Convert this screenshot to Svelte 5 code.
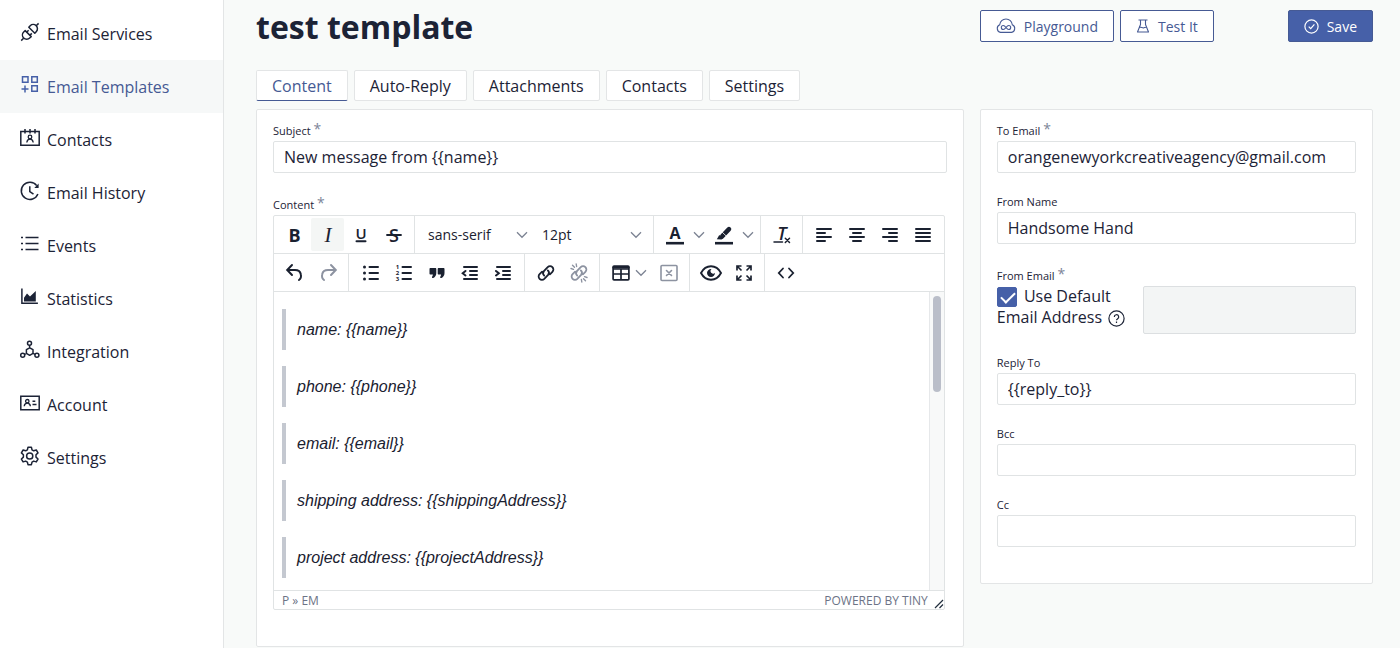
<script>
  const nav = [
    { label: 'Email Services', icon: 'plug' },
    { label: 'Email Templates', icon: 'templates', active: true },
    { label: 'Contacts', icon: 'contacts' },
    { label: 'Email History', icon: 'history' },
    { label: 'Events', icon: 'events' },
    { label: 'Statistics', icon: 'stats' },
    { label: 'Integration', icon: 'integration' },
    { label: 'Account', icon: 'account' },
    { label: 'Settings', icon: 'gear' }
  ];
  const tabs = ['Content', 'Auto-Reply', 'Attachments', 'Contacts', 'Settings'];
  const lines = [
    'name: {{name}}',
    'phone: {{phone}}',
    'email: {{email}}',
    'shipping address: {{shippingAddress}}',
    'project address: {{projectAddress}}'
  ];

  let activeTab = $state('Content');
  let subject = $state('New message from {{name}}');
  let toEmail = $state('orangenewyorkcreativeagency@gmail.com');
  let fromName = $state('Handsome Hand');
  let replyTo = $state('{{reply_to}}');
  let bcc = $state('');
  let cc = $state('');
  let useDefault = $state(true);
  let fromEmail = $state('');
  const visibleShare = 33;
</script>

{#snippet navIcon(name)}
  <svg class="nav-icon" width="20" height="20" viewBox="0 0 20 20" fill="none" stroke="currentColor" stroke-width="1.5" aria-hidden="true">
    {#if name === 'plug'}
      <path d="M1.2 18.6l2.4-2.4M16.2 3.8l2.4-2.4" />
      <path d="M5.2 8.6l6 6-1.5 1.4a4.2 4.2 0 0 1-6-6z" stroke-linejoin="round" />
      <path d="M8.8 5.2l6 6 1.4-1.5a4.2 4.2 0 0 0-6-6z" stroke-linejoin="round" />
      <path d="M6.6 10.2l2-2M9.8 13.4l2-2" />
    {:else if name === 'templates'}
      <path d="M2.5 1.8H8v5.5H2.5zM11.8 1.8h5.5v5.5h-5.5zM11.8 10.8h5.5v5.5h-5.5zM5 10.5v7M1.5 14h7" />
    {:else if name === 'contacts'}
      <path d="M.8 3.5h18.4v13.7H.8zM5 1v4.5M10 1v4.5M15 1v4.5" />
      <circle cx="10" cy="9" r="1.8" stroke-width="1.3" />
      <path d="M6.8 14.5c.2-2 1.5-3.3 3.2-3.3s3 1.3 3.200 3.3" stroke-width="1.3" />
    {:else if name === 'history'}
      <path d="M16.7 4.6A8.6 8.6 0 1 0 17.9 13M9.8 5.2v5.3l3.7 2.7" />
      <path d="M18.6 2.6V7h-4.3z" fill="currentColor" stroke="none" />
    {:else if name === 'events'}
      <path d="M5.5 3.5h13M5.5 9.5h13M5.5 15.5h13M1 3.5h2M1 9.5h2M1 15.5h2" />
    {:else if name === 'stats'}
      <path d="M1.9 1.5v14.7h16" />
      <path d="M4 14.5v-3.8l3-4.2 3 3L15.800 4v10.500z" fill="currentColor" stroke="none" />
    {:else if name === 'integration'}
      <circle cx="9.5" cy="3.2" r="2" />
      <circle cx="2.7" cy="15.3" r="2" />
      <circle cx="16.9" cy="15.3" r="2" />
      <path d="M9.7 7.8l3.3 1.9v3.7l-3.3 1.9-3.3-1.9V9.7zM9.6 5.2v2.6M4.5 14.4l2-1M13 13.4l2.1 1" stroke-linejoin="round" />
    {:else if name === 'account'}
      <path d="M.8 3.2h18.4v13.5H.8zM12.5 8.3h2.8M12.5 11.6h4" />
      <circle cx="7.3" cy="8.2" r="1.7" stroke-width="1.3" />
      <path d="M4.2 13.3c.2-1.9 1.4-3.1 3.1-3.1s2.9 1.2 3.1 3.1" stroke-width="1.3" />
    {:else}
      <circle cx="9.7" cy="10" r="3.1" />
      <path stroke-linejoin="round" d="M8 1.2h3.4l.6 2.6 1.7 1 2.6-.8 1.7 2.9-2 1.900v2.300l2 1.900-1.700 2.900-2.600-.8-1.700 1-.6 2.600H8l-.6-2.600-1.700-1-2.600.8L1.400 13l2-1.900V8.800l-2-1.900L3.100 4l2.600.8 1.700-1z" />
    {/if}
  </svg>
{/snippet}

{#snippet chevron()}
  <svg class="chevron" width="12" height="8" viewBox="0 0 12 8" fill="none" stroke="currentColor" stroke-width="1.3" aria-hidden="true">
    <path d="M1 1.300l5 5 5-5" />
  </svg>
{/snippet}

{#snippet tool(name)}
  <svg width="24" height="24" viewBox="0 0 24 24" fill="none" stroke="currentColor" stroke-width="2" stroke-linecap="round" aria-hidden="true">
    {#if name === 'Bold'}
      <text x="11.5" y="18.500" class="letter bold">B</text>
    {:else if name === 'Italic'}
      <text x="12" y="19" class="letter serif">I</text>
    {:else if name === 'Underline'}
      <text x="12" y="15.500" class="letter under">U</text>
      <path d="M7.500 18.200h9" />
    {:else if name === 'Strikethrough'}
      <text x="12" y="18.500" class="letter strike">S</text>
      <path d="M5 12h14" stroke-width="1.800" />
    {:else if name === 'Text color'}
      <text x="12" y="16" class="letter color">A</text>
      <path d="M3 20.200h18" stroke-width="2.600" stroke-linecap="butt" />
    {:else if name === 'Highlight color'}
      <path d="M3 20.200h18" stroke-width="2.600" stroke-linecap="butt" />
      <path d="M10.300 13.200l6.700-7" stroke-width="4.600" />
      <path d="M4.800 16.300l2.500-4.400 3.800 3.600-1.600 1z" fill="currentColor" stroke="none" />
      <path d="M10.500 9.500l3.700 3.500" stroke="#fff" stroke-width=".8" />
    {:else if name === 'Clear formatting'}
      <text x="12" y="17" class="letter tx">T</text>
      <path d="M4 19h8.500M15.300 15.300l4.200 4.200M19.500 15.300l-4.200 4.200" stroke-width="1.500" />
    {:else if name === 'Align left'}
      <path d="M5 6h14M5 10h8M5 14h14M5 18h8" />
    {:else if name === 'Align center'}
      <path d="M5 6h14M8 10h8M5 14h14M8 18h8" />
    {:else if name === 'Align right'}
      <path d="M5 6h14M11 10h8M5 14h14M11 18h8" />
    {:else if name === 'Justify'}
      <path d="M5 6h14M5 10h14M5 14h14M5 18h14" />
    {:else if name === 'Undo'}
      <path d="M9 4L4.200 9 9 14M4.500 9H12c3.200 0 5.300 1.700 5.800 4.300.5 2.300-.3 4.800-1.800 5.700" />
    {:else if name === 'Redo'}
      <path d="M15 4l4.800 5L15 14M19.500 9H12c-3.200 0-5.300 1.700-5.800 4.300-.5 2.300.3 4.800 1.800 5.700" />
    {:else if name === 'Bullet list'}
      <path d="M10.500 6h8.500M10.500 12h8.500M10.500 18h8.500" />
      <path d="M5.500 6h0M5.500 12h0M5.500 18h0" stroke-width="3" />
    {:else if name === 'Numbered list'}
      <path d="M10.500 6h8.500M10.500 12h8.500M10.500 18h8.500" />
      <text x="5.500" y="8" class="num">1</text>
      <text x="5.500" y="14" class="num">2</text>
      <text x="5.500" y="20" class="num">3</text>
    {:else if name === 'Blockquote'}
      <path fill="currentColor" stroke="none" d="M5.500 7h4.800c.6 0 1 .4 1 1v4c0 2.400-1.200 4.100-3 5-.8.4-1.700-.5-1.200-1.300.4-.8.700-1.500.8-2.300H5.500c-.6 0-1-.4-1-1V8c0-.6.4-1 1-1zM13.700 7h4.800c.6 0 1 .4 1 1v4c0 2.400-1.200 4.100-3 5-.8.4-1.700-.5-1.200-1.300.4-.8.700-1.500.8-2.300h-2.400c-.6 0-1-.4-1-1V8c0-.6.400-1 1-1z" />
    {:else if name === 'Decrease indent'}
      <path d="M6 6h13M12 10h7M12 14h7M6 18h13M7.500 10l-2.800 2.300 2.800 2.200" />
    {:else if name === 'Increase indent'}
      <path d="M6 6h13M12 10h7M12 14h7M6 18h13M5 10l2.800 2.300L5 14.500" />
    {:else if name === 'Link' || name === 'Remove link'}
      <path stroke-width="1.800" d="M10.200 14.600a3.300 3.300 0 0 1-.3-4.500l3.800-4a3.300 3.300 0 0 1 4.700 4.700l-2.500 2.500M13.800 9.400a3.300 3.300 0 0 1 .3 4.500l-3.800 4a3.300 3.300 0 0 1-4.700-4.700l2.500-2.500" />
      {#if name === 'Remove link'}
        <path stroke-width="1.400" d="M4 7.500l2.500.8M5.500 4.200l2 2M9.200 3l.4 2.500M20 16.500l-2.500-.8M18.500 19.800l-2-2M14.800 21l-.4-2.500" />
      {/if}
    {:else if name === 'Table'}
      <path stroke-width="1.700" d="M5 5.200h14c.5 0 .9.400.9.900v11.800c0 .5-.4.900-.9.900H5a.9.900 0 0 1-.9-.9V6.100c0-.5.400-.9.900-.9zM4 8h16M4 13h16M12 8v10" />
      <path d="M4.500 6.500h15" stroke-width="2.200" />
    {:else if name === 'Remove table'}
      <path stroke-width="1.600" d="M5 4.500h14c.7 0 1 .4 1 1v13c0 .6-.3 1-1 1H5c-.7 0-1-.4-1-1v-13c0-.6.300-1 1-1zM9.500 9.500l5 5M14.500 9.500l-5 5" />
    {:else if name === 'Preview'}
      <path stroke-width="1.900" d="M2 12c2.300-4.300 5.800-6.700 10-6.700S19.700 7.700 22 12c-2.300 4.300-5.800 6.700-10 6.700S4.300 16.300 2 12z" />
      <path fill="currentColor" stroke="none" d="M12.500 8a4 4 0 1 0 3.500 3.800 2.200 2.200 0 0 1-2.600.8 2.600 2.600 0 0 1-.9-4.600z" />
    {:else if name === 'Fullscreen'}
      <path stroke-width="1.700" stroke-linecap="butt" d="M5 9.500V5h4.500M14.500 5H19v4.500M19 14.500V19h-4.500M9.500 19H5v-4.500M5.500 5.500l4 4M18.500 5.500l-4 4M18.500 18.500l-4-4M5.500 18.500l4-4" />
    {:else}
      <path stroke-width="1.800" d="M9 7.500L4.800 12 9 16.500M15 7.500l4.200 4.500-4.200 4.500" />
    {/if}
  </svg>
{/snippet}

{#snippet toolButton(name, state)}
  <button type="button" class="tool {state ?? ''}" aria-label={name} title={name}>{@render tool(name)}</button>
{/snippet}

{#snippet splitButton(name)}
  {@render toolButton(name)}
  <button type="button" class="split" aria-label="{name} options">{@render chevron()}</button>
{/snippet}

<div class="app">
  <nav class="sidebar" aria-label="Main">
    {#each nav as item}
      <a href="#{item.icon}" class:active={item.active} aria-current={item.active ? 'page' : undefined}>
        {@render navIcon(item.icon)}
        <span>{item.label}</span>
      </a>
    {/each}
  </nav>

  <main>
    <header class="columns">
      <h1>test template</h1>
      <div class="actions">
        <button type="button" class="btn">
          <svg width="20" height="16" viewBox="0 0 20 16" fill="none" stroke="currentColor" stroke-width="1.100" aria-hidden="true">
            <path d="M4.500 14.400a4 4 0 0 1-.8-7.600C4 3.600 6.600 1 10 1s6 2.600 6.300 5.800a4 4 0 0 1-.8 7.600z" />
            <path d="M10 9.500c-1-1.300-1.700-2-2.700-2a2 2 0 0 0 0 4c1 0 1.700-.7 2.700-2s1.700-2 2.700-2a2 2 0 0 1 0 4c-1 0-1.700-.7-2.700-2z" />
          </svg>
          Playground
        </button>
        <button type="button" class="btn">
          <svg width="14" height="16" viewBox="0 0 14 16" fill="none" stroke="currentColor" stroke-width="1.100" aria-hidden="true">
            <path d="M2.500 2h9M4.500 2v4.500L1.500 14h11l-3-7.500V2M3.400 9.500c1.600-.9 2.800.7 4.200.4 1-.2 1.700-.8 2.800-.6" stroke-linejoin="round" />
          </svg>
          Test It
        </button>
        <button type="button" class="btn primary">
          <svg width="15" height="15" viewBox="0 0 15 15" fill="none" stroke="currentColor" stroke-width="1.200" aria-hidden="true">
            <circle cx="7.500" cy="7.500" r="6.600" />
            <path d="M4.700 7.700l2 2 3.700-4.300" />
          </svg>
          Save
        </button>
      </div>
    </header>

    <div class="tabs" role="tablist">
      {#each tabs as tab}
        <button type="button" role="tab" aria-selected={activeTab === tab} class:selected={activeTab === tab} onclick={() => (activeTab = tab)}>{tab}</button>
      {/each}
    </div>

    <div class="columns panels">
      <section class="card">
        <div class="field">
          <label class="required" for="subject">Subject <sup>*</sup></label>
          <input id="subject" type="text" bind:value={subject} />
        </div>
        <div class="field">
          <span class="label required" id="content-label">Content <sup>*</sup></span>
          <div class="editor">
            <div class="row">
              <div class="group">
                {@render toolButton('Bold')}
                {@render toolButton('Italic', 'on')}
                {@render toolButton('Underline')}
                {@render toolButton('Strikethrough')}
              </div>
              <div class="group wide">
                <div class="pick">
                  <select aria-label="Font"><option>sans-serif</option><option>serif</option></select>
                  {@render chevron()}
                </div>
                <div class="pick">
                  <select aria-label="Font size"><option>12pt</option><option>14pt</option></select>
                  {@render chevron()}
                </div>
              </div>
              <div class="group">
                {@render splitButton('Text color')}
                {@render splitButton('Highlight color')}
              </div>
              <div class="group">{@render toolButton('Clear formatting')}</div>
              <div class="group">
                {@render toolButton('Align left')}
                {@render toolButton('Align center')}
                {@render toolButton('Align right')}
                {@render toolButton('Justify')}
              </div>
            </div>
            <div class="row">
              <div class="group">
                {@render toolButton('Undo')}
                {@render toolButton('Redo', 'off')}
              </div>
              <div class="group wide">
                {@render toolButton('Bullet list')}
                {@render toolButton('Numbered list')}
                {@render toolButton('Blockquote')}
                {@render toolButton('Decrease indent')}
                {@render toolButton('Increase indent')}
              </div>
              <div class="group">
                {@render toolButton('Link')}
                {@render toolButton('Remove link', 'off')}
              </div>
              <div class="group">
                <button type="button" class="menu" aria-label="Table">{@render tool('Table')}{@render chevron()}</button>
                {@render toolButton('Remove table', 'off')}
              </div>
              <div class="group">
                {@render toolButton('Preview')}
                {@render toolButton('Fullscreen')}
              </div>
              <div class="group">{@render toolButton('Source code')}</div>
            </div>
            <div class="area">
              <div class="body" role="textbox" tabindex="0" aria-multiline="true" aria-labelledby="content-label" contenteditable="true">
                {#each lines as line}
                  <blockquote><em>{line}</em></blockquote>
                {/each}
              </div>
              <div class="scroll"><div class="thumb" style="height: {visibleShare}%"></div></div>
            </div>
            <div class="status">
              <span>P » EM</span>
              <a href="#tiny">POWERED BY TINY</a>
              <svg width="10" height="10" viewBox="0 0 10 10" stroke="#222f3e" stroke-width="1.200" aria-hidden="true"><path d="M1 9l8-8M5.500 9L9 5.500" /></svg>
            </div>
          </div>
        </div>
      </section>

      <section class="card">
        <div class="field">
          <label class="required" for="to">To Email <sup>*</sup></label>
          <input id="to" type="text" bind:value={toEmail} />
        </div>
        <div class="field">
          <label for="from">From Name</label>
          <input id="from" type="text" bind:value={fromName} />
        </div>
        <div class="field">
          <label class="required" for="from-email">From Email <sup>*</sup></label>
          <div class="default-row">
            <div class="default">
              <input id="use-default" type="checkbox" bind:checked={useDefault} />
              <label for="use-default">Use Default Email Address</label>
              <svg width="17" height="17" viewBox="0 0 17 17" fill="none" stroke="currentColor" stroke-width="1.200" aria-hidden="true">
                <circle cx="8.500" cy="8.500" r="7.600" />
                <path d="M6.300 6.900a2.200 2.200 0 1 1 3.200 2c-.7.400-1 .7-1 1.400M8.500 11.600v1.300" />
              </svg>
            </div>
            <input id="from-email" type="text" disabled={useDefault} bind:value={fromEmail} />
          </div>
        </div>
        <div class="field">
          <label for="reply">Reply To</label>
          <input id="reply" type="text" bind:value={replyTo} />
        </div>
        <div class="field">
          <label for="bcc">Bcc</label>
          <input id="bcc" type="text" bind:value={bcc} />
        </div>
        <div class="field">
          <label for="cc">Cc</label>
          <input id="cc" type="text" bind:value={cc} />
        </div>
      </section>
    </div>
  </main>
</div>

<style>
  :global(body) {
    margin: 0;
    background: #f8faf9;
  }
  .app, .app * {
    box-sizing: border-box;
  }
  .app {
    display: flex;
    min-height: 100vh;
    font-family: 'Open Sans', sans-serif;
    font-size: 16px;
    color: #1c2336;
  }
  button, input, select {
    font: inherit;
    color: inherit;
    margin: 0;
  }
  button {
    cursor: pointer;
  }
  svg {
    flex: none;
    overflow: visible;
  }
  .sidebar {
    flex: 0 0 224px;
    padding-top: 7px;
    background: #fff;
    border-right: 1px solid #e3e5e6;
  }
  .sidebar a {
    display: flex;
    align-items: center;
    gap: 7px;
    height: 53px;
    padding-left: 20px;
    color: inherit;
    text-decoration: none;
  }
  .sidebar a.active {
    background: #f6f8f8;
    color: #465a94;
    font-weight: 500;
  }
  .sidebar a.active .nav-icon {
    color: #4660a8;
  }
  .nav-icon {
    margin-bottom: 4px;
  }
  main {
    flex: 1;
    min-width: 0;
    padding: 0 27px 0 32px;
  }
  .columns {
    display: grid;
    grid-template-columns: minmax(0, 9fr) minmax(0, 5fr);
    gap: 16px;
  }
  h1 {
    margin: 0;
    font-size: 32px;
    line-height: 54px;
    font-weight: 700;
  }
  header {
    height: 70px;
  }
  .actions {
    display: flex;
    gap: 6px;
    padding-top: 10px;
  }
  .btn {
    display: flex;
    align-items: center;
    gap: 8px;
    height: 32px;
    padding: 0 15px;
    border: 1px solid #465a94;
    border-radius: 2px;
    background: #fff;
    color: #465a94;
    font-size: 14px;
    white-space: nowrap;
  }
  .btn.primary {
    margin-left: auto;
    background: #4660a8;
    color: #fff;
  }
  .tabs {
    display: flex;
    gap: 6px;
    margin-bottom: 8px;
  }
  .tabs button {
    height: 31px;
    padding: 0 15px;
    border: 1px solid #e3e5e6;
    border-radius: 2px;
    background: #fff;
  }
  .tabs button.selected {
    color: #465a94;
    border-bottom-color: #465a94;
  }
  .panels {
    align-items: start;
  }
  .card {
    display: flex;
    flex-direction: column;
    gap: 18px;
    padding: 7px 16px 36px;
    border: 1px solid #e3e5e6;
    border-radius: 2px;
    background: #fff;
  }
  .field {
    display: flex;
    flex-direction: column;
  }
  .field > label, .label {
    height: 21px;
    font-size: 11px;
    line-height: 21px;
  }
  .field > .required {
    height: 24px;
    padding-top: 3px;
  }
  sup {
    font-size: 14px;
    line-height: 0;
    vertical-align: 1px;
    color: #7d8598;
  }
  .field input[type='text'] {
    width: 100%;
    height: 32px;
    padding: 0 10px;
    border: 1px solid #e0e3e4;
    border-radius: 2px;
    background: #fff;
  }
  .default-row {
    display: grid;
    grid-template-columns: minmax(0, 2fr) minmax(0, 3fr);
    gap: 4px;
  }
  .field .default-row input[type='text'] {
    height: 48px;
  }
  .field .default-row input[type='text']:disabled {
    background: #f3f5f5;
    border-color: #dcdfe1;
  }
  .default {
    line-height: 21px;
  }
  .default svg {
    margin-left: 2px;
    vertical-align: -4px;
  }
  .default input {
    appearance: none;
    display: inline-block;
    width: 20px;
    height: 20px;
    margin-right: 3px;
    border-radius: 2px;
    background: #fff;
    border: 1px solid #4660a8;
    vertical-align: -5px;
  }
  .default input:checked {
    background: #4660a8;
  }
  .default input:checked::after {
    content: '';
    display: block;
    width: 12px;
    height: 6px;
    margin: 4px 3px;
    border: solid #fff;
    border-width: 0 0 2px 2px;
    transform: rotate(-45deg);
  }
  .editor {
    margin-right: 2px;
    border: 1px solid #e0e3e4;
    border-radius: 2px;
    color: #1a2130;
  }
  .row {
    display: flex;
    border-bottom: 1px solid #e0e3e4;
  }
  .group {
    display: flex;
    align-items: center;
    height: 37px;
    padding: 0 4px;
    border-right: 1px solid #e0e3e4;
  }
  .group.wide {
    padding: 0 5px;
  }
  .group:last-child {
    border-right: 0;
  }
  .tool, .split, .menu {
    display: flex;
    align-items: center;
    justify-content: center;
    width: 33px;
    height: 33px;
    padding: 0;
    border: 0;
    border-radius: 2px;
    background: none;
  }
  .tool.on {
    background: #f4f6f5;
  }
  .tool.off {
    color: #8d93a1;
  }
  .split {
    width: 16px;
  }
  .menu {
    width: 48px;
    gap: 2px;
  }
  .chevron {
    color: #7c8393;
  }
  .letter {
    text-anchor: middle;
    fill: currentColor;
    stroke: none;
    font-size: 18px;
    font-weight: 600;
  }
  .bold {
    font-weight: 700;
  }
  .under {
    font-size: 15px;
  }
  .serif {
    font-family: 'Liberation Serif', serif;
    font-style: italic;
    font-weight: 400;
    font-size: 21px;
  }
  .color {
    font-weight: 700;
    font-size: 16px;
  }
  .tx {
    font-style: italic;
  }
  .num {
    text-anchor: middle;
    fill: currentColor;
    stroke: none;
    font-size: 6px;
    font-weight: 700;
  }
  .pick {
    display: grid;
    align-items: center;
    width: 114px;
  }
  .pick select {
    grid-area: 1 / 1;
    appearance: none;
    width: 100%;
    height: 33px;
    padding: 0 24px 0 8px;
    border: 0;
    background: none;
    font-size: 14px;
  }
  .pick .chevron {
    grid-area: 1 / 1;
    justify-self: end;
    margin-right: 6px;
    pointer-events: none;
  }
  .area {
    display: flex;
  }
  .body {
    flex: 1;
    display: flex;
    flex-direction: column;
    gap: 16px;
    padding: 17px 8px 12px;
    outline: 0;
    font-family: 'Liberation Sans', Arial, sans-serif;
    font-size: 16px;
  }
  blockquote {
    margin: 0;
    padding: 8px 0 8px 11px;
    border-left: 4px solid #c4c8d0;
    line-height: 25px;
  }
  .scroll {
    width: 15px;
    padding: 4px 3px;
    border-left: 1px solid #e6e8ea;
    background: #f8f9f9;
  }
  .thumb {
    width: 8px;
    border-radius: 4px;
    background: #babec9;
  }
  .status {
    display: flex;
    align-items: center;
    height: 19px;
    padding-left: 8px;
    border-top: 1px solid #e0e3e4;
    font-size: 12px;
    color: #6c7386;
  }
  .status a {
    margin-left: auto;
    margin-right: 6px;
    color: inherit;
    text-decoration: none;
  }
  .status svg {
    align-self: flex-end;
  }
</style>
